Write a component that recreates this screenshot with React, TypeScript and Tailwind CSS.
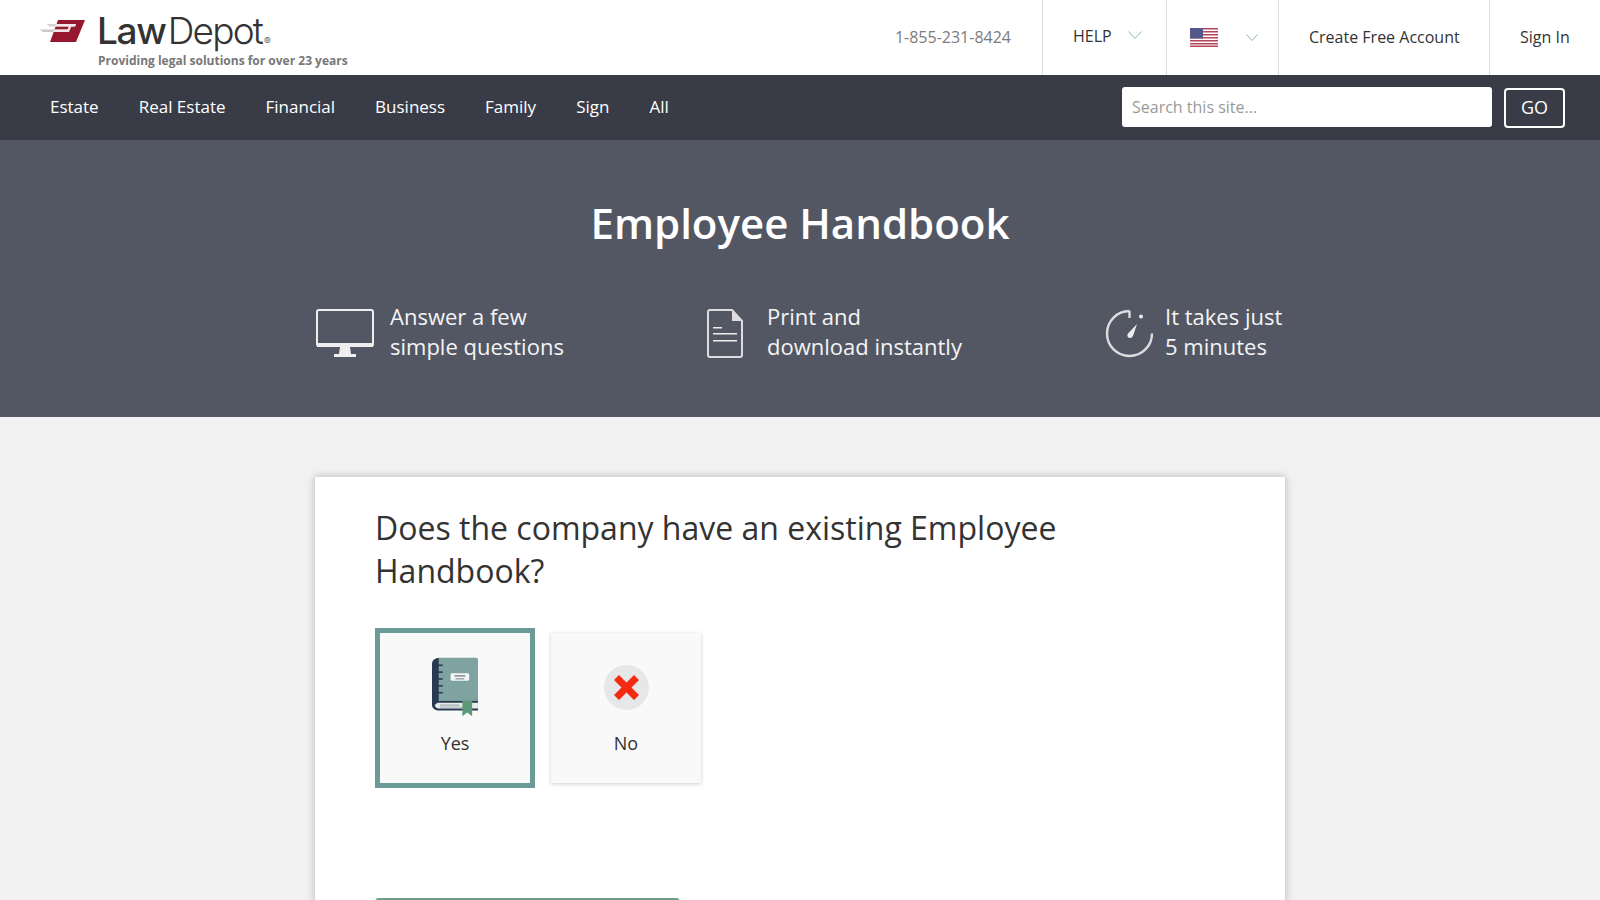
const navItems = ['Estate', 'Real Estate', 'Financial', 'Business', 'Family', 'Sign', 'All']

function LogoMark() {
  return (
    <svg width="46" height="24" viewBox="0 0 46 24" className="shrink-0">
      <path d="M18 1 H45 L36 23 H10 Z" fill="#96182f" />
      <path d="M7 5 H36 L35 7.5 H9 Z" fill="#d4d4d4" />
      <path d="M0 10.5 H28 L27 13 H3 Z" fill="#c9c9c9" />
      <path d="M16 5 H36 L35 7.5 H15 Z" fill="#f3e6e8" />
      <path d="M14 10.5 H28 L27 13 H13 Z" fill="#f3e6e8" />
      <path d="M31.5 7 L29 13 H26.5 L29 7 Z" fill="#f3e6e8" />
    </svg>
  )
}

function Flag() {
  return (
    <svg width="28" height="19" viewBox="0 0 28 19" className="shrink-0">
      <rect width="28" height="19" fill="#fff" />
      <rect y="0" width="28" height="1.5" fill="#b5475a" />
      <rect y="3" width="28" height="1.5" fill="#b5475a" />
      <rect y="6" width="28" height="1.5" fill="#b5475a" />
      <rect y="9" width="28" height="1.5" fill="#b5475a" />
      <rect y="12" width="28" height="1.5" fill="#b5475a" />
      <rect y="15" width="28" height="1.5" fill="#b5475a" />
      <rect y="17.5" width="28" height="1.5" fill="#b5475a" />
      <rect width="13" height="10.5" fill="#54588a" />
    </svg>
  )
}

function Caret({ width, height, className }: { width: number; height: number; className: string }) {
  return (
    <svg width={width} height={height} viewBox={`0 0 ${width} ${height}`} className={className}>
      <path d={`M0.5 0.5 L${width / 2} ${height - 0.5} L${width - 0.5} 0.5`} fill="none" stroke="#8fb3b0" strokeWidth="1" />
    </svg>
  )
}

function MonitorIcon() {
  return (
    <svg width="58" height="48" viewBox="0 0 58 48" className="shrink-0">
      <rect x="1" y="1" width="56" height="36" rx="2" fill="none" stroke="#eeeeef" strokeWidth="2" />
      <rect x="1" y="34" width="56" height="4" fill="#eeeeef" />
      <path d="M24 38 H34 L35 45 H23 Z" fill="#eeeeef" />
      <rect x="18" y="45" width="22" height="3" fill="#eeeeef" />
    </svg>
  )
}

function DocIcon() {
  return (
    <svg width="36" height="49" viewBox="0 0 36 49" className="shrink-0">
      <path d="M3 1 H25 L35 12 V46 Q35 48 33 48 H3 Q1 48 1 46 V3 Q1 1 3 1 Z" fill="none" stroke="#dddde1" strokeWidth="2" />
      <path d="M25 1 V12 H35 Z" fill="#dddde1" />
      <rect x="6" y="18" width="9" height="1.5" fill="#eeeeef" />
      <rect x="6" y="24" width="24" height="1.5" fill="#eeeeef" />
      <rect x="6" y="31" width="24" height="1.5" fill="#eeeeef" />
    </svg>
  )
}

function TimerIcon() {
  return (
    <svg width="49" height="49" viewBox="0 0 49 49" className="shrink-0">
      <path d="M24.5 2 A22.5 22.5 0 1 0 47 24.5" fill="none" stroke="#dddde1" strokeWidth="2.4" />
      <path d="M24.5 2 L24.5 9" stroke="#dddde1" strokeWidth="2.4" />
      <circle cx="36" cy="7.5" r="2" fill="#eeeeef" />
      <path d="M32 15 L28 27 Q26 30 23.5 28.5 Q21.5 27 23 24.5 Z" fill="#eeeeef" />
    </svg>
  )
}

function BookIcon() {
  return (
    <svg width="46" height="60" viewBox="0 0 47 60" className="shrink-0">
      <path d="M7 0 H45 Q47 0 47 2 V44 H7 Z" fill="#7fa3a1" />
      <path d="M7 0 V44 Q2 45 2 50 L6 54 Q0 52 0 47 V6 Q0 1 7 0 Z" fill="#283a50" />
      <path d="M6 44 H47 V54 H6 Q0 53 0 48 Q1 44 6 44 Z" fill="#283a50" />
      <path d="M6 46 H47 V52 H6 Q3 51 3 49 Q3 47 6 46 Z" fill="#e8ebea" />
      <rect x="8" y="48" width="20" height="1" fill="#8e9a9c" />
      <rect x="8" y="50" width="24" height="1" fill="#a9b3b4" />
      <rect x="2" y="7" width="9" height="1.6" fill="#283a50" />
      <rect x="2" y="14" width="9" height="1.6" fill="#283a50" />
      <rect x="2" y="21" width="9" height="1.6" fill="#283a50" />
      <rect x="2" y="28" width="9" height="1.6" fill="#283a50" />
      <rect x="2" y="35" width="9" height="1.6" fill="#283a50" />
      <rect x="19" y="16" width="19" height="7.5" rx="1.5" fill="#f4f6f5" />
      <rect x="23" y="18" width="11" height="1.3" fill="#6f7a80" />
      <rect x="24" y="21" width="9" height="1.3" fill="#8a949a" />
      <path d="M31 44 H41 V60 L36 56 L31 60 Z" fill="#5f9a78" />
    </svg>
  )
}

function NoIcon() {
  return (
    <svg width="45" height="45" viewBox="0 0 45 45" className="shrink-0">
      <circle cx="22.5" cy="22.5" r="22.5" fill="#e6e7e9" />
      <path d="M15 10 L22.5 17.5 L30 10 L35 15 L27.5 22.5 L35 30 L30 35 L22.5 27.5 L15 35 L10 30 L17.5 22.5 L10 15 Z" fill="#f42a12" />
    </svg>
  )
}

function HeroItem({ icon, lines, gap }: { icon: React.ReactNode; lines: string[]; gap: string }) {
  return (
    <div className={`flex items-start ${gap}`}>
      {icon}
      <p className="mt-[-8px] text-[22px] leading-[30px] text-[#f4f4f5]">
        {lines[0]}
        <br />
        {lines[1]}
      </p>
    </div>
  )
}

export default function App() {
  return (
    <div className="h-screen overflow-hidden bg-[#f1f1f1] font-['Open_Sans',sans-serif] text-[#333333]">
      <header className="flex h-[75px] items-stretch bg-white">
        <div className="flex flex-1 items-start pl-[40px]">
          <div className="mt-[19px]">
            <LogoMark />
          </div>
          <div className="ml-[12px] mt-[11px]">
            <div className="ml-[-1px] flex items-end font-['Inter',sans-serif] text-[37px] leading-[40px] tracking-[-1.3px] text-[#333333]">
              <span className="font-medium">Law</span>
              <span className="ml-[2px] font-light tracking-[-1.8px]">Depot</span>
              <span className="mb-[5px] ml-[2px] text-[10px] leading-[10px] tracking-normal text-[#666666]">®</span>
            </div>
            <p className="mt-[2px] text-[12px] leading-[16px] font-bold text-[#777777]">
              Providing legal solutions for over 23 years
            </p>
          </div>
        </div>
        <div className="flex items-center pb-[2px] pr-[31px] text-[16px] text-[#7b7b7b]">1-855-231-8424</div>
        <div className="flex w-[124px] items-center border-l border-[#dddddd] pb-[3px] pl-[30px] text-[16px]">
          HELP
          <Caret width={14} height={8} className="mb-[3px] ml-[16px] shrink-0" />
        </div>
        <div className="flex w-[112px] items-center border-l border-[#dddddd] pl-[23px]">
          <Flag />
          <Caret width={12} height={7} className="ml-[28px] shrink-0" />
        </div>
        <div className="flex w-[211px] items-center border-l border-[#dddddd] pb-[2px] pl-[30px] text-[16px]">
          Create Free Account
        </div>
        <div className="flex w-[111px] items-center border-l border-[#dddddd] pb-[2px] pl-[30px] text-[16px]">Sign In</div>
      </header>

      <nav className="flex h-[65px] items-center bg-[#393c47] pl-[50px] pr-[35px] text-white">
        <div className="flex flex-1 gap-[40px] pb-[2px] text-[17px]">
          {navItems.map((item) => (
            <a key={item} href="#">
              {item}
            </a>
          ))}
        </div>
        <div className="mb-[2px] flex h-[40px] w-[370px] items-center rounded-[3px] bg-white px-[10px] text-[16px] text-[#999999]">
          Search this site...
        </div>
        <button className="ml-[12px] h-[40px] w-[61px] rounded-[4px] border-2 border-white text-[18px]">GO</button>
      </nav>

      <section className="flex h-[277px] flex-col items-center bg-[#535763] pt-[55px] text-white">
        <h1 className="text-[42px] leading-[56px] font-semibold">Employee Handbook</h1>
        <div className="mt-[58px] flex w-[970px] pl-px">
          <div className="w-[391px]">
            <HeroItem icon={<MonitorIcon />} lines={['Answer a few', 'simple questions']} gap="gap-[16px]" />
          </div>
          <div className="w-[398px]">
            <HeroItem icon={<DocIcon />} lines={['Print and', 'download instantly']} gap="gap-[24px]" />
          </div>
          <HeroItem icon={<TimerIcon />} lines={['It takes just', '5 minutes']} gap="gap-[11px]" />
        </div>
      </section>

      <main className="flex justify-center pt-[60px]">
        <div className="w-[970px] bg-white px-[60px] pt-[29px] pb-[60px] shadow-[0_0_8px_rgba(0,0,0,0.25)]">
          <h2 className="text-[32px] leading-[43px] text-[#333333]">Does the company have an existing Employee Handbook?</h2>
          <div className="mt-[36px] flex items-center gap-[16px]">
            <button className="flex h-[160px] w-[160px] flex-col items-center border-[5px] border-[#6b9b97] bg-[#f9f9f9] pt-[24px] text-[18px]">
              <BookIcon />
              <span className="mt-[13px]">Yes</span>
            </button>
            <button className="mb-[1px] flex h-[150px] w-[150px] flex-col items-center bg-[#f9f9f9] pt-[32px] text-[18px] shadow-[0_1px_4px_rgba(0,0,0,0.2)]">
              <NoIcon />
              <span className="mt-[20px]">No</span>
            </button>
          </div>
          <div className="mt-[110px] h-[60px] w-[305px] rounded-[4px] bg-[#6b9e85]" />
        </div>
      </main>
    </div>
  )
}
